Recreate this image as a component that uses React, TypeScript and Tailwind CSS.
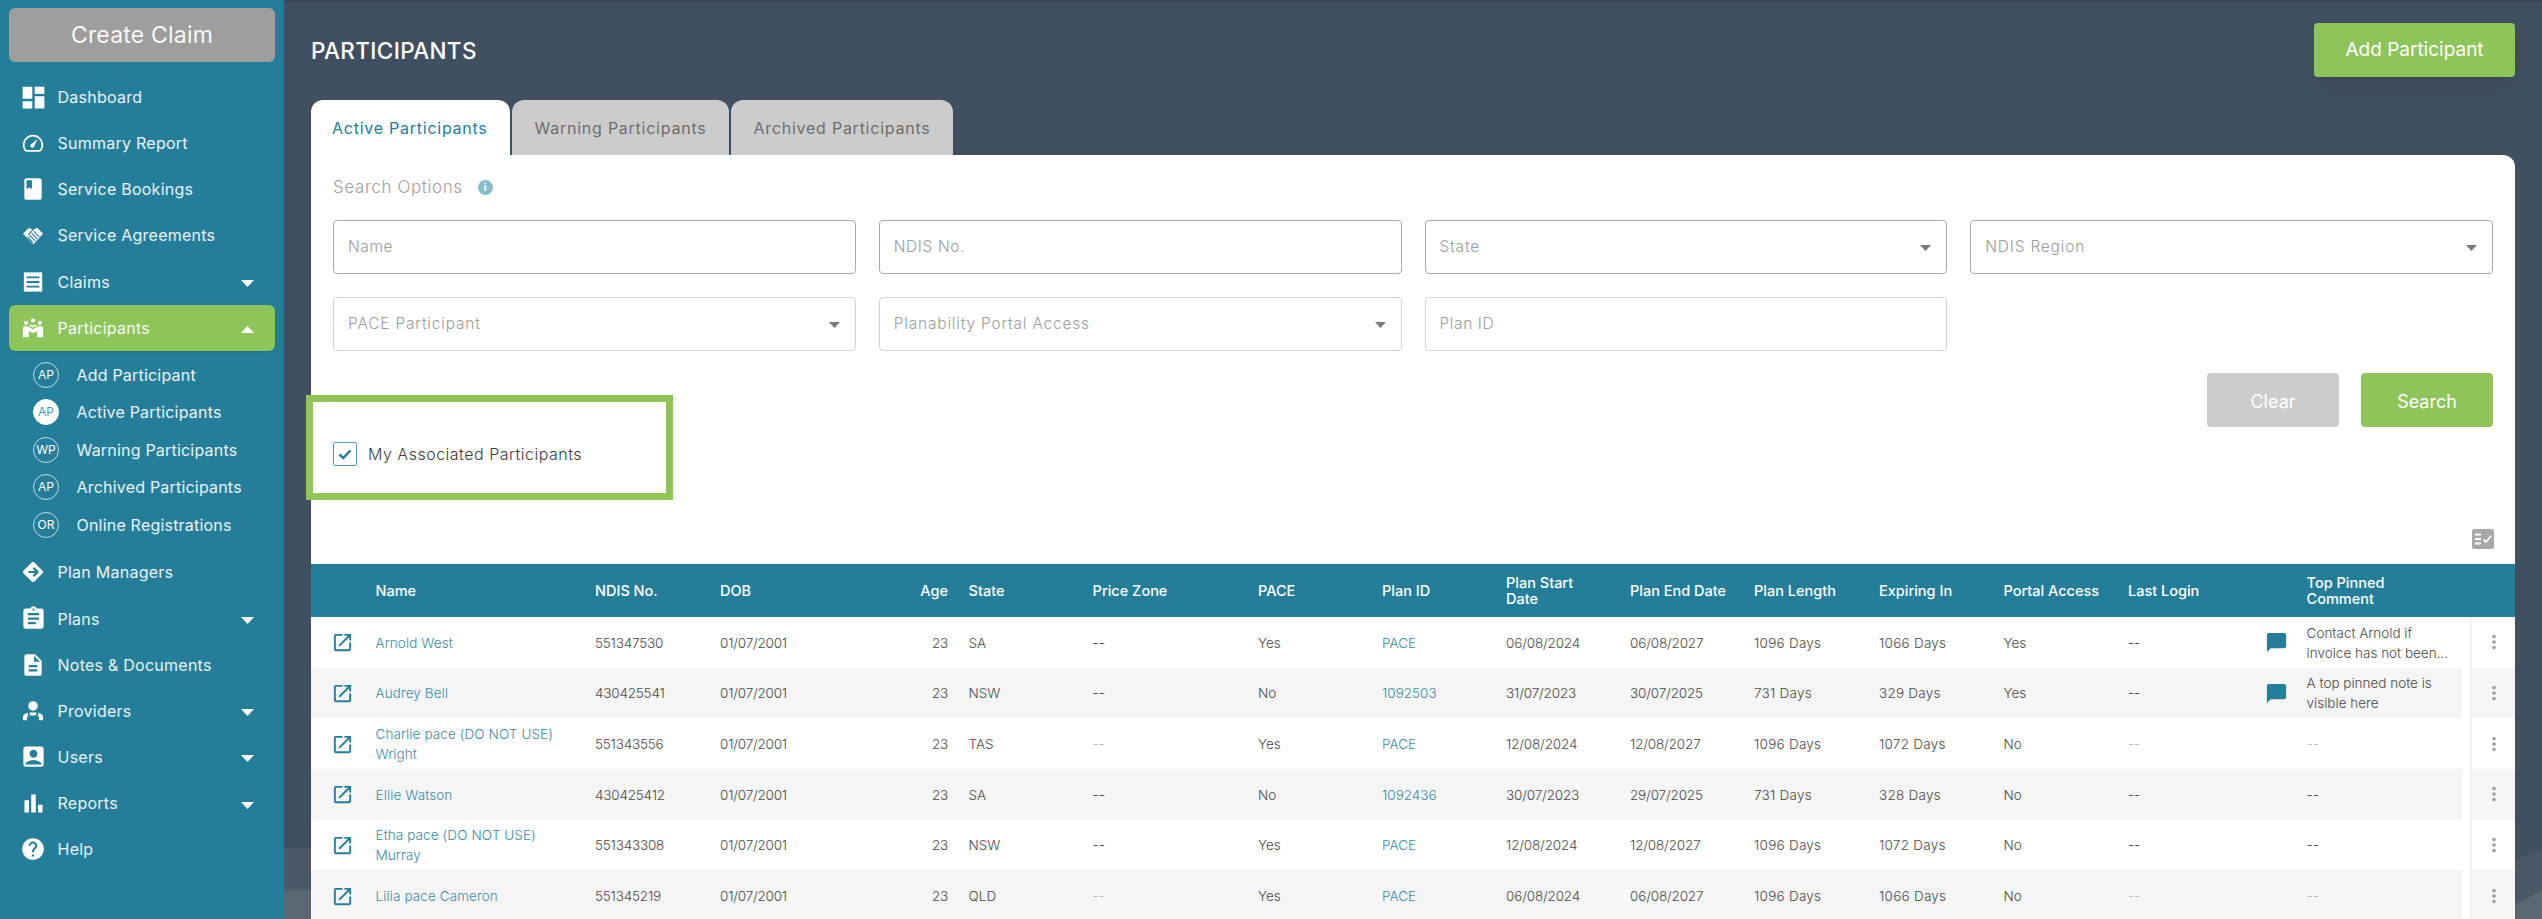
import React from "react";
import {
  MdDashboard, MdBook, MdAssignment, MdDescription, MdAccountBox, MdBarChart, MdHelp,
  MdOpenInNew, MdChatBubble, MdMoreVert,
} from "react-icons/md";

const white = "#ffffff";

function Gauge() {
  return (
    <svg viewBox="0 0 24 24" className="w-[22px] h-[22px] shrink-0" fill="none">
      <path d="M5 20.5h14a2 2 0 0 0 1.7-1A10.2 10.2 0 1 0 3.3 19.500a2 2 0 0 0 1.700 1z" stroke={white} strokeWidth="2" />
      <path d="M17 7.500l-3.600 8a2.200 2.200 0 1 1-3-2.500z" fill={white} />
    </svg>
  );
}
function Shake() {
  return (
    <svg viewBox="0 0 24 24" className="w-[22px] h-[22px] shrink-0">
      <path d="M1 10.500 L7.500 4 L12 6.500 L16.500 4 L23 10.500 L12.500 22 Z" fill={white} />
      <path d="M12 6.500 L7 11.500 M8 12 L14.500 18.500 M10.500 10 L17 16.500 M13 8 L19 14 M6 14 L12 20" stroke="#247e99" strokeWidth="1.200" fill="none" />
    </svg>
  );
}
function Receipt() {
  return (
    <svg viewBox="0 0 24 24" className="w-[22px] h-[24px] shrink-0">
      <path d="M2 2 l1.700 -1 l1.700 1 l1.700 -1 l1.700 1 l1.700 -1 l1.700 1 l1.700 -1 l1.700 1 l1.700 -1 l1.700 1 l1.700 -1 l1.300 1 V22 l-1.700 1 l-1.700 -1 l-1.700 1 l-1.700 -1 l-1.700 1 l-1.700 -1 l-1.700 1 l-1.700 -1 l-1.700 1 l-1.700 -1 l-1.700 1 l-1.300 -1 Z" fill={white} />
      <path d="M5 7h14M5 12h14M5 17h14" stroke="#247e99" strokeWidth="2" />
    </svg>
  );
}
function People() {
  return (
    <svg viewBox="0 0 24 24" className="w-[22px] h-[22px] shrink-0" fill={white}>
      <circle cx="12" cy="3.800" r="2.300" />
      <circle cx="4.500" cy="6.500" r="2.300" />
      <circle cx="19.500" cy="6.500" r="2.300" />
      <path d="M1 12 Q1 10 3 10 H6.500 L12 13.500 L17.500 10 H21 Q23 10 23 12 V22 H16.500 V15.500 L12 17.500 L7.500 15.500 V22 H1 Z" />
      <path d="M8.500 8.500 Q12 12 15.500 8.500" stroke={white} strokeWidth="1.800" fill="none" />
    </svg>
  );
}
function DiamondArrow() {
  return (
    <svg viewBox="0 0 24 24" className="w-[22px] h-[22px] shrink-0">
      <path d="M10.600 1.600 a2 2 0 0 1 2.800 0 l9 9 a2 2 0 0 1 0 2.800 l-9 9 a2 2 0 0 1 -2.800 0 l-9 -9 a2 2 0 0 1 0 -2.800 z" fill={white} />
      <path d="M7 12h9M12.500 7.500 17 12l-4.500 4.500" stroke="#247e99" strokeWidth="2.400" fill="none" />
    </svg>
  );
}
function Provider() {
  return (
    <svg viewBox="0 0 24 24" className="w-[22px] h-[22px] shrink-0" fill={white}>
      <circle cx="12" cy="6.500" r="5.200" />
      <path d="M1 22 V19 Q1 15.500 6 14 L7 18 H5.500 V22 Z" />
      <path d="M23 22 V19 Q23 15.500 18 14 L17 18 H18.500 V22 Z" />
      <path d="M8 13.500 H16 L15 17 H9 Z" />
    </svg>
  );
}
function Triangle({ up }: { up?: boolean }) {
  return (
    <svg viewBox="0 0 13 7" className="w-[13px] h-[7px]">
      <path d={up ? "M0 7 L6.500 0 L13 7 Z" : "M0 0 L13 0 L6.500 7 Z"} fill="#ffffff" />
    </svg>
  );
}
function SelectCaret() {
  return (
    <svg viewBox="0 0 11 6" className="w-[11px] h-[6px] mt-[1px]">
      <path d="M0 0 L11 0 L5.500 6 Z" fill="#7a7a7a" />
    </svg>
  );
}
function ColumnSettings() {
  return (
    <svg viewBox="0 0 22 20" className="w-[22px] h-[20px]">
      <rect width="22" height="20" rx="2.500" fill="#a9a9a9" />
      <path d="M3 5.500h6M3 10h6M3 14.500h6" stroke={white} strokeWidth="1.800" />
      <path d="M11.500 10.500l2.500 2.500 5-6" stroke={white} strokeWidth="1.800" fill="none" />
    </svg>
  );
}

function NavItem({ icon, label, caret, active }: { icon: React.ReactNode; label: string; caret?: "up" | "down"; active?: boolean }) {
  return (
    <div className={`flex items-center h-[46.150px] mx-[9px] pl-[13px] rounded-[6px] ${active ? "bg-[#8dc55b] shadow-sm" : ""}`}>
      <span className="w-[22px] flex justify-center mr-[13.500px] text-white">{icon}</span>
      <span className="text-[16px] text-white/90 tracking-[0.25px]">{label}</span>
      {caret && (
        <span className="ml-auto mr-[21px] flex mt-[4px]">
          <Triangle up={caret === "up"} />
        </span>
      )}
    </div>
  );
}

function SubItem({ code, label, active }: { code: string; label: string; active?: boolean }) {
  return (
    <div className="flex items-center h-[37.500px] pl-[33px]">
      <span className={`w-[26px] h-[26px] rounded-full border flex items-center justify-center text-[12px] ${active ? "bg-white border-white text-[#4d9ab1]" : "border-white/70 text-white"}`}>{code}</span>
      <span className="ml-[17.500px] text-[16px] text-white/90 tracking-[0.2px]">{label}</span>
    </div>
  );
}

function Sidebar() {
  return (
    <aside className="w-[284px] shrink-0 bg-[#247e99] pt-[8px] z-10">
      <div className="mx-[9px] h-[54px] rounded-[6px] bg-[#9e9e9e] flex items-center justify-center text-[23px] text-white/95 tracking-[0.2px] mb-[12px]">Create Claim</div>
      <NavItem icon={<MdDashboard className="w-[29px] h-[29px] shrink-0" />} label="Dashboard" />
      <NavItem icon={<Gauge />} label="Summary Report" />
      <NavItem icon={<MdBook className="w-[26px] h-[26px] shrink-0" />} label="Service Bookings" />
      <NavItem icon={<Shake />} label="Service Agreements" />
      <NavItem icon={<Receipt />} label="Claims" caret="down" />
      <NavItem icon={<People />} label="Participants" caret="up" active />
      <div className="pt-[5px] pb-[6px]">
        <SubItem code="AP" label="Add Participant" />
        <SubItem code="AP" label="Active Participants" active />
        <SubItem code="WP" label="Warning Participants" />
        <SubItem code="AP" label="Archived Participants" />
        <SubItem code="OR" label="Online Registrations" />
      </div>
      <NavItem icon={<DiamondArrow />} label="Plan Managers" />
      <NavItem icon={<MdAssignment className="w-[27px] h-[27px] shrink-0" />} label="Plans" caret="down" />
      <NavItem icon={<MdDescription className="w-[26px] h-[26px] shrink-0" />} label="Notes & Documents" />
      <NavItem icon={<Provider />} label="Providers" caret="down" />
      <NavItem icon={<MdAccountBox className="w-[27px] h-[27px] shrink-0" />} label="Users" caret="down" />
      <NavItem icon={<MdBarChart className="w-[27px] h-[27px] shrink-0" />} label="Reports" caret="down" />
      <NavItem icon={<MdHelp className="w-[26px] h-[26px] shrink-0" />} label="Help" />
    </aside>
  );
}

function TextField({ placeholder, light }: { placeholder: string; light?: boolean }) {
  return (
    <input
      readOnly
      placeholder={placeholder}
      className={`h-[54px] w-full rounded-[4px] border bg-white pl-[14px] pb-[2px] text-[15.500px] font-light tracking-[0.6px] outline-none placeholder:text-[#9c9c9c] ${light ? "border-[#d4d4d4]" : "border-[#ababab]"}`}
    />
  );
}
function SelectField({ placeholder, light }: { placeholder: string; light?: boolean }) {
  return (
    <div className={`h-[54px] w-full rounded-[4px] border bg-white pl-[14px] pr-[15px] flex items-center justify-between ${light ? "border-[#d4d4d4]" : "border-[#ababab]"}`}>
      <span className="text-[15.500px] font-light text-[#9c9c9c] tracking-[0.8px]">{placeholder}</span>
      <SelectCaret />
    </div>
  );
}

const tpl = "grid-cols-[64.500px_219.500px_125px_160px_88.600px_124px_165.400px_124px_124px_124px_124px_125px_124.500px_124.500px_139px_39.600px_155.400px]";

type R = {
  name: string; ndis: string; state: string; pace: string; plan: string; start: string; end: string;
  len: string; exp: string; portal: string; comment?: string; mutedDash?: boolean;
};
const rows: R[] = [
  { name: "Arnold West", ndis: "551347530", state: "SA", pace: "Yes", plan: "PACE", start: "06/08/2024", end: "06/08/2027", len: "1096 Days", exp: "1066 Days", portal: "Yes", comment: "Contact Arnold if invoice has not been..." },
  { name: "Audrey Bell", ndis: "430425541", state: "NSW", pace: "No", plan: "1092503", start: "31/07/2023", end: "30/07/2025", len: "731 Days", exp: "329 Days", portal: "Yes", comment: "A top pinned note is visible here" },
  { name: "Charlie pace (DO NOT USE) Wright", ndis: "551343556", state: "TAS", pace: "Yes", plan: "PACE", start: "12/08/2024", end: "12/08/2027", len: "1096 Days", exp: "1072 Days", portal: "No", mutedDash: true },
  { name: "Ellie Watson", ndis: "430425412", state: "SA", pace: "No", plan: "1092436", start: "30/07/2023", end: "29/07/2025", len: "731 Days", exp: "328 Days", portal: "No" },
  { name: "Etha pace (DO NOT USE) Murray", ndis: "551343308", state: "NSW", pace: "Yes", plan: "PACE", start: "12/08/2024", end: "12/08/2027", len: "1096 Days", exp: "1072 Days", portal: "No" },
  { name: "Lilia pace Cameron", ndis: "551345219", state: "QLD", pace: "Yes", plan: "PACE", start: "06/08/2024", end: "06/08/2027", len: "1096 Days", exp: "1066 Days", portal: "No", mutedDash: true },
];

const heads = ["", "Name", "NDIS No.", "DOB", "Age", "State", "Price Zone", "PACE", "Plan ID", "Plan Start Date", "Plan End Date", "Plan Length", "Expiring In", "Portal Access", "Last Login", "", "Top Pinned Comment"];

function Row({ r, alt }: { r: R; alt: boolean }) {
  const bg = alt ? "bg-[#f5f5f5]" : "bg-white";
  const dash = r.mutedDash ? "text-[#b5b5b5]" : "text-[#333333]";
  return (
    <div className="flex h-[50.670px] text-[13.500px] font-light text-[#4a4a4a]">
      <div className={`grid ${tpl} w-[2151px] items-center pt-[1px] ${bg}`}>
        <span className="pl-[20px] flex text-[#247e99]"><MdOpenInNew className="w-[23px] h-[23px]" /></span>
        <span className="text-[#3a8ba4] leading-[20px] pr-[20px] tracking-[0.1px]">{r.name}</span>
        <span className="tracking-[-0.2px]">{r.ndis}</span>
        <span className="tracking-[-0.2px]">01/07/2001</span>
        <span className="text-right pr-[20.600px] tracking-[-0.2px]">23</span>
        <span>{r.state}</span>
        <span className={dash}>--</span>
        <span>{r.pace}</span>
        <span className="text-[#3a8ba4]">{r.plan}</span>
        <span className="tracking-[-0.15px]">{r.start}</span>
        <span className="tracking-[-0.15px]">{r.end}</span>
        <span className="tracking-[0.25px]">{r.len}</span>
        <span className="tracking-[0.25px]">{r.exp}</span>
        <span>{r.portal}</span>
        <span className={dash}>--</span>
        <span className="flex text-[#247e99]">{r.comment && <MdChatBubble className="w-[23px] h-[23px] -ml-[2px]" />}</span>
        <span className={r.comment ? "leading-[20px] pr-[8px]" : dash}>{r.comment ?? "--"}</span>
      </div>
      <div className="w-[8px] bg-white" />
      <div className={`w-[45px] border-l-2 border-[#f2f2f2] flex items-center justify-center text-[#a0a0a0] ${bg}`}>
        <MdMoreVert className="w-[22px] h-[22px]" />
      </div>
    </div>
  );
}

function Main() {
  return (
    <main className="relative flex-1 min-w-0 px-[27px] bg-[#415060]">
      <svg className="absolute inset-0 w-full h-full" viewBox="0 0 2258 919" preserveAspectRatio="none">
        <rect width="2258" height="2" fill="#3b4652" />
        <path d="M0 848 H40 V860 H2230 L2258 850 V919 H0 Z" fill="#4b5966" />
        <path d="M0 890 H40 V905 H2230 L2258 890 V919 H0 Z" fill="#5a6772" />
      </svg>
      <div className="relative">
        <div className="flex items-center justify-between pt-[23px] pb-[23px]">
          <h1 className="text-[22.500px] font-medium text-white tracking-[0.35px] pt-[1px]">PARTICIPANTS</h1>
          <button className="w-[201px] h-[54px] rounded-[4px] bg-[#8dc55b] text-white text-[19px] shadow-lg">Add Participant</button>
        </div>
        <div className="flex gap-[2px] h-[55px]">
          <div className="w-[199px] bg-white rounded-t-[12px] flex items-center pl-[21px] text-[16px] text-[#247e99] tracking-[0.75px]">Active Participants</div>
          <div className="w-[217px] bg-[#cccccc] rounded-t-[12px] flex items-center justify-center text-[16px] text-[#6e6e6e] tracking-[0.75px]">Warning Participants</div>
          <div className="w-[222px] bg-[#cccccc] rounded-t-[12px] flex items-center justify-center text-[16px] text-[#6e6e6e] tracking-[0.75px]">Archived Participants</div>
        </div>
        <section className="relative bg-white rounded-tr-[12px] h-[800px]">
          <div className="px-[22px] pt-[22px]">
            <div className="flex items-center h-[20px] mb-[23px] pt-[1px]">
              <span className="text-[17px] text-[#a0a0a0] tracking-[0.6px] font-light">Search Options</span>
              <span className="ml-[15px] w-[15px] h-[15px] rounded-full bg-[#86bccb] text-white text-[10px] font-bold flex items-center justify-center">i</span>
            </div>
            <div className="grid grid-cols-4 gap-x-[23px] gap-y-[23px]">
              <TextField placeholder="Name" />
              <TextField placeholder="NDIS No." />
              <SelectField placeholder="State" />
              <SelectField placeholder="NDIS Region" />
              <SelectField placeholder="PACE Participant" light />
              <SelectField placeholder="Planability Portal Access" light />
              <TextField placeholder="Plan ID" light />
            </div>
            <div className="flex justify-end gap-[22px] mt-[22px]">
              <button className="w-[132px] h-[54px] rounded-[4px] bg-[#cccccc] text-white text-[18px] pt-[2px]">Clear</button>
              <button className="w-[132px] h-[54px] rounded-[4px] bg-[#8dc55b] text-white text-[18px] pt-[2px]">Search</button>
            </div>
          </div>
          <div className="absolute left-[-5px] top-[240px] w-[367px] h-[105px] border-[7px] border-[#90c556] pl-[20px] pt-[40px]">
            <label className="flex items-center">
              <span className="w-[24px] h-[24px] rounded-[2px] border border-[#4f97ae] flex items-center justify-center">
                <svg viewBox="0 0 16 16" className="w-[16px] h-[16px]">
                  <path d="M2.500 8.500 6.300 12 13.500 4.200" stroke="#247e99" strokeWidth="2.400" fill="none" />
                </svg>
              </span>
              <span className="ml-[11px] text-[16px] font-light text-[#3c3c3c] tracking-[0.5px]">My Associated Participants</span>
            </label>
          </div>
          <div className="flex justify-end pr-[21px] mt-[102px] mb-[15px]"><ColumnSettings /></div>
          <div className="flex h-[53px] bg-[#247e99] text-white text-[14.500px] font-medium">
            <div className={`grid ${tpl} w-[2151px] items-center leading-[16px] pt-[1px]`}>
              {heads.map((h, i) => (
                <span key={i} className={i === 4 ? "text-right pr-[20.600px]" : "pr-[24px]"}>{h}</span>
              ))}
            </div>
          </div>
          {rows.map((r, i) => (
            <Row key={r.name} r={r} alt={i % 2 === 1} />
          ))}
        </section>
      </div>
    </main>
  );
}

export default function App() {
  return (
    <div className="flex w-[2542px] h-[919px] overflow-hidden font-[family-name:Inter,'Liberation_Sans',sans-serif]">
      <Sidebar />
      <Main />
    </div>
  );
}
